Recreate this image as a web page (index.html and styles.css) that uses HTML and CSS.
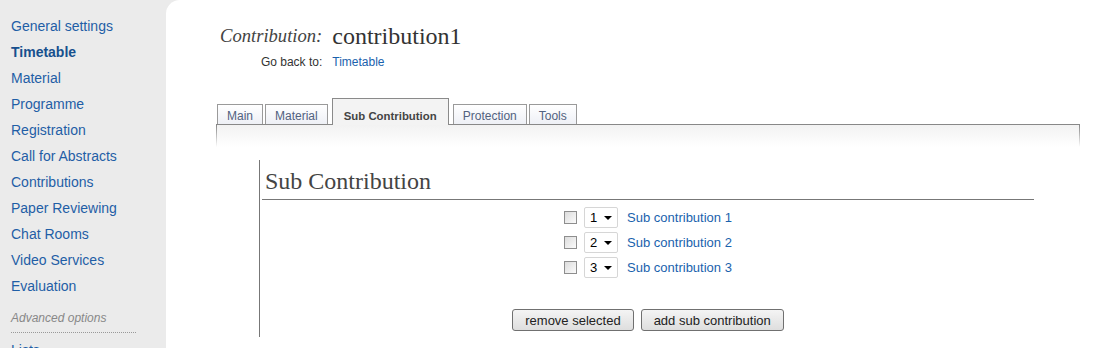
FILE: index.html
```html
<!DOCTYPE html>
<html>
<head>
<meta name="viewport" content="width=device-width, initial-scale=1.0">
<link rel="stylesheet" href="styles.css">
</head>
<body>

<div class="page">
  <div class="sidebar">
    <a href="#">General settings</a>
    <a href="#" class="active">Timetable</a>
    <a href="#">Material</a>
    <a href="#">Programme</a>
    <a href="#">Registration</a>
    <a href="#">Call for Abstracts</a>
    <a href="#">Contributions</a>
    <a href="#">Paper Reviewing</a>
    <a href="#">Chat Rooms</a>
    <a href="#">Video Services</a>
    <a href="#">Evaluation</a>
    <div class="section-label">Advanced options</div>
    <a href="#">Lists</a>
  </div>

  <div class="main">
    <div class="header">
      <span class="label title-label">Contribution:</span>
      <span class="title">contribution1</span>
      <span class="label">Go back to:</span>
      <a href="#" class="back">Timetable</a>
    </div>

    <div class="tabs">
      <a href="#" class="tab">Main</a>
      <a href="#" class="tab">Material</a>
      <a href="#" class="tab active">Sub Contribution</a>
      <a href="#" class="tab">Protection</a>
      <a href="#" class="tab">Tools</a>
    </div>
    <div class="panel"></div>

    <div class="box">
      <h2>Sub Contribution</h2>
      <div class="list">
        <div class="row">
          <input type="checkbox">
          <span class="order"><select><option>1</option><option>2</option><option>3</option></select></span>
          <a href="#">Sub contribution 1</a>
        </div>
        <div class="row">
          <input type="checkbox">
          <span class="order"><select><option>1</option><option selected>2</option><option>3</option></select></span>
          <a href="#">Sub contribution 2</a>
        </div>
        <div class="row">
          <input type="checkbox">
          <span class="order"><select><option>1</option><option>2</option><option selected>3</option></select></span>
          <a href="#">Sub contribution 3</a>
        </div>
      </div>
      <div class="actions">
        <button>remove selected</button>
        <button>add sub contribution</button>
      </div>
    </div>
  </div>
</div>

</body>
</html>
```

FILE: styles.css
```css
body {
  margin: 0;
  background-color: #ebebeb;
  font-family: "Liberation Sans", Arial, sans-serif;
  overflow: hidden;
}

a {
  color: #1a62ad;
  text-decoration: none;
}

.page {
  display: flex;
  height: 348px;
}

.sidebar {
  width: 166px;
  flex-shrink: 0;
  padding-top: 13px;
}

.sidebar a {
  display: block;
  padding-left: 11px;
  font-size: 14px;
  line-height: 26px;
  color: #1f5ea6;
}

.sidebar a.active {
  font-weight: bold;
  color: #17508e;
}

.sidebar .section-label {
  margin: 10px 0 0 11px;
  width: 125px;
  padding-bottom: 5px;
  border-bottom: 1px dotted #999;
  font-size: 12px;
  font-style: italic;
  line-height: 18px;
  color: #888;
}

.sidebar .section-label + a {
  margin-top: 4px;
}

.main {
  flex: 1;
  background-color: #fff;
  border-top-left-radius: 14px;
  padding: 22px 20px 0 50px;
}

.header {
  display: grid;
  grid-template-columns: auto auto;
  justify-content: start;
  column-gap: 10px;
  margin-left: 4px;
}

.header .label {
  text-align: right;
  font-size: 12px;
  line-height: 20px;
  color: #333;
  margin-top: 2px;
}

.header .title-label {
  font-family: "Liberation Serif", "Times New Roman", serif;
  font-style: italic;
  font-size: 18.6px;
  line-height: 28px;
  color: #444;
  margin-top: 0;
}

.header .title {
  font-family: "Liberation Serif", "Times New Roman", serif;
  font-size: 24px;
  line-height: 28px;
  color: #333;
}

.header .back {
  font-size: 12px;
  line-height: 20px;
  margin-top: 2px;
}

.tabs {
  display: flex;
  align-items: flex-end;
  gap: 2px;
  margin: 26px 0 0 1px;
}

.tab {
  padding: 3px 9px 0;
  line-height: 16px;
  font-size: 12px;
  color: #52627f;
  border: 1px solid #9a9a9a;
  border-bottom: none;
  background: linear-gradient(#ffffff, #eef0f6);
}

.tab.active {
  position: relative;
  margin: 0 2px -1px;
  padding: 9px 11px 1px;
  font-size: 11.4px;
  font-weight: bold;
  color: #444;
  border-color: #8a8a8a;
  background: #f3f3f3;
}

.panel {
  height: 22px;
  border-top: 1px solid #888;
  background:
    linear-gradient(#888, rgba(136,136,136,0)) left top / 1px 100% no-repeat,
    linear-gradient(#888, rgba(136,136,136,0)) right top / 1px 100% no-repeat,
    linear-gradient(#f2f2f2, #ffffff);
}

.box {
  margin: 13px 46px 0 43px;
  padding: 0 0 6px 2px;
  border-left: 1px solid #777;
}

.box h2 {
  margin: 0;
  padding: 6px 0 3px 3px;
  font-family: "Liberation Serif", "Times New Roman", serif;
  font-weight: normal;
  font-size: 24px;
  line-height: 30px;
  color: #444;
  border-bottom: 1px solid #777;
}

.list {
  margin-top: 5px;
  display: flex;
  flex-direction: column;
  align-items: center;
}

.row {
  display: flex;
  align-items: center;
  height: 25px;
  font-size: 13px;
}

.row input {
  appearance: none;
  margin: 0 7px 0 0;
  width: 13px;
  height: 13px;
  border: 1px solid #8e8e8e;
  background: linear-gradient(135deg, #dcdcdc, #fbfbfb);
}

.order {
  position: relative;
  width: 34px;
  height: 21px;
  margin-right: 9px;
  box-sizing: border-box;
  border: 1px solid #d6d6d6;
  border-radius: 2px;
  background: #fff;
}

.order select {
  appearance: none;
  border: none;
  background: transparent;
  width: 100%;
  height: 100%;
  padding: 0 0 0 5px;
  font-family: "Liberation Sans", Arial, sans-serif;
  font-size: 13px;
  color: #000;
}

.order::after {
  content: "";
  position: absolute;
  right: 5px;
  top: 8px;
  border-left: 4px solid transparent;
  border-right: 4px solid transparent;
  border-top: 4px solid #000;
  pointer-events: none;
}

.actions {
  display: flex;
  justify-content: center;
  gap: 7px;
  margin-top: 29px;
}

.actions button {
  height: 22px;
  padding: 0 12px;
  font-family: "Liberation Sans", Arial, sans-serif;
  font-size: 13px;
  color: #222;
  border: 1px solid #707070;
  border-radius: 3px;
  background: linear-gradient(#f4f4f4, #dedede);
}
```
